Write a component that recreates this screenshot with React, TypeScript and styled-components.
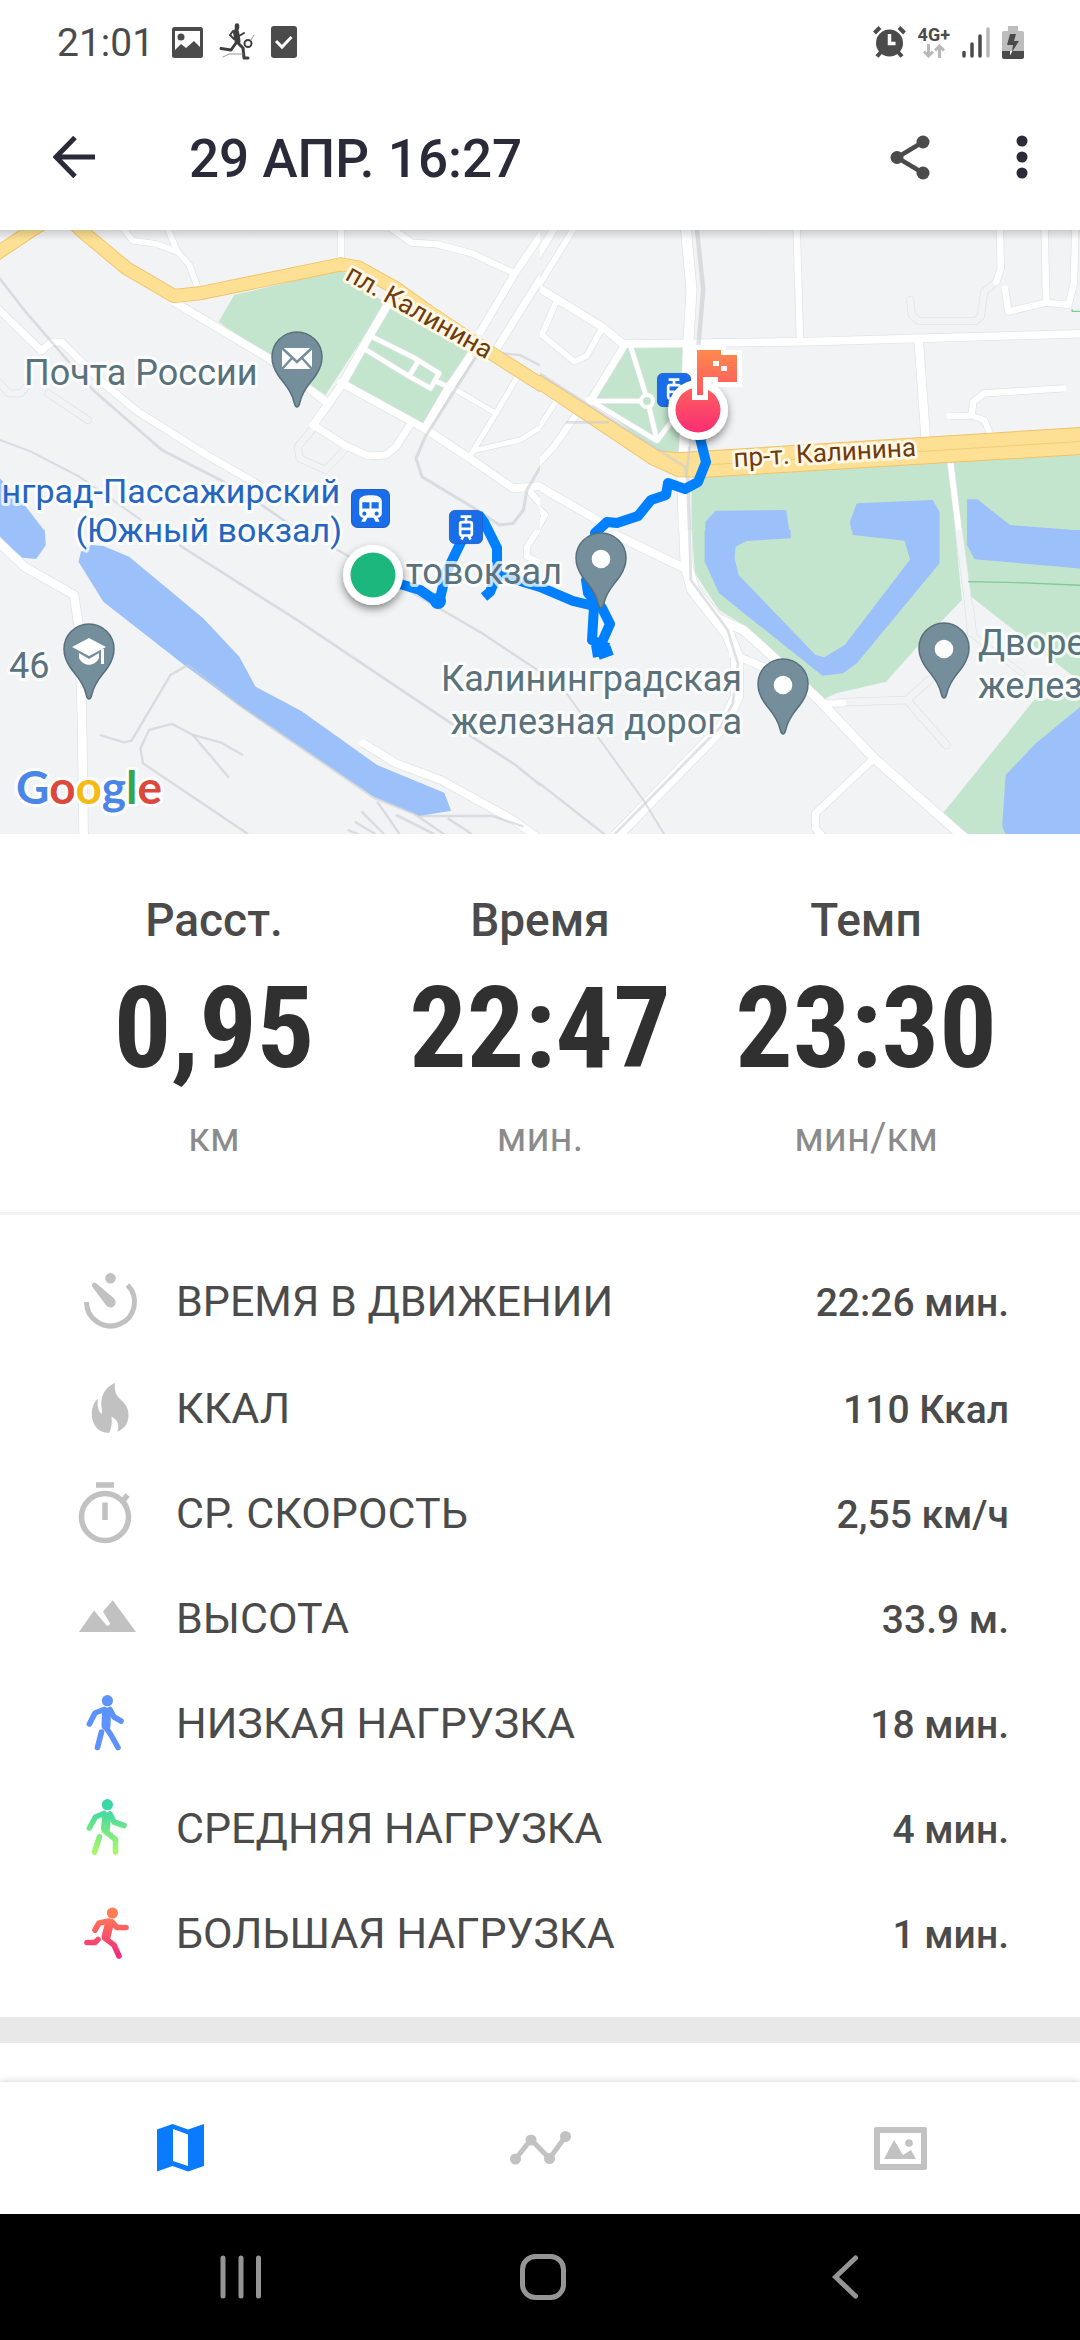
import React from 'react';
import styled, { createGlobalStyle } from 'styled-components';

const GlobalStyle = createGlobalStyle`
  *, *::before, *::after { box-sizing: border-box; }
  body { margin: 0; background: #fff; font-family: Roboto, "Noto Sans", sans-serif; color: #4b4b4b; }
  h1, dl, dt, dd, p { margin: 0; font-weight: inherit; }
  button { border: 0; padding: 0; background: none; font: inherit; color: inherit; cursor: pointer; }
  svg { display: block; flex: none; }
`;

/* ---------- layout parts ---------- */

const Screen = styled.div`
  min-height: 100vh;
  display: flex;
  flex-direction: column;
`;

const StatusBar = styled.div`
  display: flex;
  align-items: center;
  justify-content: space-between;
  height: 84px;
  padding: 0 56px 0 57px;
`;

const StatusGroup = styled.div<{ $gap: number }>`
  display: flex;
  align-items: center;
  gap: ${(p) => p.$gap}px;
`;

const Clock = styled.span`
  padding: 2px 2px 0 0;
  font-size: 39px;
  line-height: 48px;
`;

const Network = styled.span`
  display: flex;
  flex-direction: column;
  align-items: center;
  font-size: 18px;
  line-height: 18px;
  font-weight: 700;
`;

const AppBar = styled.header`
  display: flex;
  align-items: center;
  height: 146px;
  padding: 0 26px 0 42px;
`;

const IconButton = styled.button`
  display: flex;
  align-items: center;
  justify-content: center;
  width: 64px;
  height: 72px;
`;

const Title = styled.h1`
  flex: 1;
  padding: 4px 0 0 83px;
  font-size: 53px;
  line-height: 60px;
  font-weight: 500;
  color: #2a2a38;
`;

const AppActions = styled.div`
  display: flex;
  gap: 48px;
`;

const MapPanel = styled.section`
  overflow: hidden;
  background: #f1f3f4;
`;

const MapCanvas = styled.svg`
  width: 100%;
  height: auto;
`;

const Summary = styled.section`
  display: grid;
  grid-template-columns: repeat(3, 1fr);
  padding: 58px 51px 50px;
  border-bottom: 3px solid #f2f2f2;
`;

const SummaryItem = styled.div`
  display: flex;
  flex-direction: column;
  align-items: center;
`;

const SummaryLabel = styled.p`
  font-size: 46px;
  line-height: 56px;
  font-weight: 500;
`;

const SummaryValue = styled.p`
  margin-top: 12px;
  font-family: "Roboto Condensed", "Liberation Sans Narrow", Roboto, sans-serif;
  font-size: 114px;
  line-height: 136px;
  font-weight: 700;
  color: #303031;
`;

const SummaryUnit = styled.p`
  margin-top: 18px;
  font-size: 40px;
  line-height: 48px;
  color: #8b8b8b;
`;

const Details = styled.dl`
  padding: 32px 71px 32px 76px;
`;

const DetailRow = styled.div`
  display: flex;
  align-items: center;
  height: 105px;
  &:first-child { height: 108px; }
`;

const DetailLabel = styled.dt`
  flex: 1;
  padding-left: 36px;
  font-size: 43px;
  line-height: 52px;
`;

const DetailValue = styled.dd`
  padding-top: 4px;
  font-size: 39px;
  line-height: 52px;
  font-weight: 500;
`;

const Band = styled.div`
  height: 26px;
  background: #e8e8e8;
`;

const Filler = styled.div`
  flex: 1;
  min-height: 36px;
`;

const TabBar = styled.nav`
  display: grid;
  grid-template-columns: repeat(3, 1fr);
  height: 132px;
  background: #fff;
  box-shadow: 0 -2px 6px rgba(0, 0, 0, 0.12);
`;

const Tab = styled.button<{ $active?: boolean }>`
  display: flex;
  align-items: center;
  justify-content: center;
  color: ${(p) => (p.$active ? '#0a7bff' : '#c2c2c2')};
`;

const SystemBar = styled.div`
  display: grid;
  grid-template-columns: repeat(3, 1fr);
  height: 126px;
  padding: 0 84px 0 90px;
  background: #000;
  color: #959595;
`;

const SystemButton = styled.button`
  display: flex;
  align-items: center;
  justify-content: center;
`;

/* ---------- map ---------- */

type Road = { d: string; w: number; tone?: 'main' | 'faint' };
type TileData = {
  x: number;
  y: number;
  parks?: string[];
  water?: string[];
  avenue?: string[];
  avenueShapes?: string[];
  roads: Road[];
  rails: { d: string; w: number }[];
  trails?: string[];
};

const tiles: TileData[] = [
  {
    x: 0,
    y: 220,
    parks: [
      'M680 225L990 150L1120 250L945 525L780 415L635 305Z',
      'M1130 265L1370 400L1230 612L1005 485Z',
    ],
    water: ['M0 775L75 860L135 940H0Z'],
    avenue: ['M-20 108L90 32L140 0', 'M215 10L240 35L365 143L505 228L580 220L990 133L1040 142L1150 205L1240 272L1370 362L1470 428L1580 500'],
    roads: [
      { d: 'M0 490L25 520L60 520L85 490', w: 20, tone: 'faint' },
      { d: 'M140 520L255 600', w: 20, tone: 'faint' },
      { d: 'M905 630L865 680L870 715L945 750L1000 690', w: 20, tone: 'faint' },
      { d: 'M355 20L385 62L455 72L515 95L550 135L575 205', w: 18 },
      { d: 'M485 20L515 95', w: 18 },
      { d: 'M990 20V115', w: 20 },
      { d: 'M1130 20L1195 68L1270 73L1370 100L1490 158', w: 20 },
      { d: 'M1600 0L1495 160L1395 335', w: 22 },
      { d: 'M1640 60L1530 240L1440 390', w: 22 },
      { d: 'M505 245L780 415L940 540', w: 24 },
      { d: 'M-10 262L120 392L150 366L180 367L300 490L400 575L600 705L760 800', w: 22 },
      { d: 'M1125 255L1060 370L995 490L910 615', w: 24 },
      { d: 'M1070 345L1200 412L1275 460L1250 505L1190 470L1055 385', w: 15 },
      { d: 'M1215 422L1190 465', w: 15 },
      { d: 'M1262 482L1300 500', w: 15 },
      { d: 'M990 488L1240 630L1360 712L1490 805L1580 797', w: 24 },
      { d: 'M1375 395L1300 510L1235 625', w: 26 },
      { d: 'M910 615L1000 675L1070 708L1120 705L1150 680L1190 615', w: 22 },
      { d: 'M1300 495L1440 580L1500 475', w: 16 },
      { d: 'M1440 580L1370 700', w: 16 },
      { d: 'M1375 692L1510 660L1580 615', w: 16 },
      { d: 'M1535 810L1568 850', w: 20 },
    ],
    rails: [
      { d: 'M-5 170L70 270L270 510L470 690L640 780L760 855L850 920', w: 8 },
      { d: 'M0 660L90 695L230 770L410 900', w: 6 },
      { d: 'M1400 380L1370 430L1235 650L1208 715L1225 770L1370 860L1450 915L1490 910L1520 870L1530 810L1575 730', w: 9 },
      { d: 'M1460 400L1510 405L1575 440', w: 7 },
    ],
  },
  {
    x: 540,
    y: 220,
    parks: [
      'M150 545L245 385L418 383V695H345Z',
      'M480 770L1570 703V940H440V780Z',
    ],
    water: [
      'M480 905L510 872L715 870L725 940H480Z',
      'M920 850L1140 840L1160 875V940H905L900 905Z',
      'M1240 838H1270L1365 915L1570 932V940H1240Z',
    ],
    avenueShapes: ['M-5 462L130 550L345 692L400 698L530 690L1575 622V703L480 772L400 770L320 733L-5 508Z'],
    roads: [
      { d: 'M1325 185L1290 215L1280 290L1265 303H1100L1080 285L1075 240', w: 20, tone: 'faint' },
      { d: 'M-60 195L45 20', w: 22 },
      { d: 'M-20 225L95 30', w: 18 },
      { d: 'M423 20L440 210L430 380L418 700', w: 30 },
      { d: 'M745 20L755 360', w: 20 },
      { d: 'M240 372L420 370L780 365L1100 355L1580 341', w: 24 },
      { d: 'M-10 200L180 320L245 375', w: 24 },
      { d: 'M45 250L5 345L100 425L135 408L180 325', w: 18 },
      { d: 'M240 385L145 545', w: 22 },
      { d: 'M265 385L312 540L337 650', w: 15 },
      { d: 'M150 543H310', w: 15 },
      { d: 'M140 538L340 662L400 580', w: 15 },
      { d: 'M1100 365L1120 655', w: 26 },
      { d: 'M1335 20L1338 145L1325 185', w: 20 },
      { d: 'M1350 205L1360 275L1470 248L1535 255L1550 190L1555 20', w: 20 },
      { d: 'M1465 20L1470 248', w: 20 },
      { d: 'M1520 505L1290 520L1258 545L1253 587L1190 588', w: 20 },
      { d: 'M1253 587L1290 600L1307 640', w: 18 },
      { d: 'M1192 730L1217 940', w: 18 },
      { d: 'M-5 625L45 548', w: 16 },
      { d: 'M-5 730L40 680L105 585', w: 20 },
      { d: 'M-10 795L200 920', w: 24 },
      { d: 'M-20 850L15 885L-10 930', w: 18 },
      { d: 'M415 770L420 940', w: 34 },
    ],
    rails: [
      { d: 'M455 20L474 210L460 375', w: 13 },
      { d: 'M-5 458L345 690L420 740L425 770L434 680', w: 7 },
      { d: 'M75 607H200', w: 8 },
      { d: 'M428 770L434 940', w: 9 },
    ],
    trails: ['M1545 268V274H1570'],
  },
  {
    x: 0,
    y: 530,
    water: [
      'M0 0H130L133 45L105 87L65 83L0 25Z',
      'M235 65L265 45L300 48L375 80L590 265L695 380L742 470L875 543L1095 705L1290 788L1310 842L1218 858L1085 800L700 530L535 405L300 215L228 95Z',
    ],
    roads: [
      { d: 'M-10 30L70 110L215 195L230 300L238 560L243 930', w: 26 },
      { d: 'M1055 640L1150 700L1280 750L1490 870L1570 930', w: 24 },
      { d: 'M1562 0L1530 50V80L1575 100', w: 18 },
    ],
    rails: [
      { d: 'M520 45L870 275L1310 580L1490 700L1575 770', w: 8 },
      { d: 'M960 48L1200 190L1400 310L1575 430', w: 7 },
      { d: 'M290 615L360 637L382 632L495 435L545 405', w: 7 },
      { d: 'M720 912L415 700L408 655L433 600L500 582L560 615L640 637L705 675', w: 7 },
      { d: 'M560 615L665 743', w: 7 },
      { d: 'M545 405L700 530L1085 803L1200 850L1300 920', w: 7 },
      { d: 'M1095 815L1160 912', w: 7 },
      { d: 'M1150 855L1260 912', w: 8 },
      { d: 'M1220 858H1430L1520 890', w: 7 },
      { d: 'M1050 845L1115 912', w: 7 },
      { d: 'M1030 875L1090 912', w: 7 },
      { d: 'M1010 900L1040 912', w: 7 },
      { d: 'M1300 865L1370 912', w: 7 },
    ],
  },
  {
    x: 540,
    y: 530,
    parks: [
      'M440 -5L450 130L520 240L600 290L820 510L860 490L1005 455L1100 345L1225 210L1205 -5Z',
      'M1225 -5H1575V460L1245 195Z',
      'M1435 510L1575 495V930H1240L1170 850Z',
    ],
    water: [
      'M478 -5V95L520 190L820 437L880 430L920 400L1160 100V-5H905L908 15L1058 32L1075 88L885 345L825 382L800 375L577 135L565 85L568 50L600 33L728 25V-5Z',
      'M1240 -5V45L1262 88L1575 116V-5Z',
      'M1575 525L1440 640L1352 735L1342 890L1360 930H1575Z',
    ],
    roads: [
      { d: 'M870 517L1065 510L1130 450', w: 22, tone: 'faint' },
      { d: 'M1065 510L1180 645', w: 22, tone: 'faint' },
      { d: 'M1250 225L1262 320L1400 430', w: 14, tone: 'faint' },
      { d: 'M1215 -5L1240 190L1252 310', w: 20, tone: 'faint' },
      { d: 'M220 15L420 115', w: 26 },
      { d: 'M422 -5L426 110L445 180L545 310L572 380V500L530 590L215 925', w: 36 },
      { d: 'M510 262L590 300L660 365L810 510L970 685L1240 930', w: 28 },
      { d: 'M560 375L600 390L690 430', w: 24 },
      { d: 'M970 685L800 850V895L830 930', w: 22 },
      { d: 'M820 520H880', w: 20 },
    ],
    rails: [
      { d: 'M434 -5L438 150L545 300L565 370L575 400L560 520L525 590L205 925', w: 8 },
      { d: 'M-5 757L190 915', w: 7 },
      { d: 'M70 480L300 810L362 915', w: 6 },
    ],
    trails: ['M1243 155L1390 158L1575 166'],
  },
];

function MapTile({ tile }: { tile: TileData }) {
  const id = `tile-${tile.x}-${tile.y}`;
  const line = { fill: 'none', strokeLinejoin: 'round' as const };
  return (
    <g transform={`translate(${tile.x} ${tile.y}) scale(.34439 .33333)`} clipPath={`url(#${id})`}>
      <clipPath id={id}>
        <rect width="1569" height="931" />
      </clipPath>
      <rect width="1569" height="931" fill="#f1f3f4" />
      {tile.parks?.map((d) => <path key={d} d={d} fill="#c4e5cd" />)}
      {tile.water?.map((d) => <path key={d} d={d} fill="#9cc0fa" />)}
      {tile.roads.map((r) => (
        <path key={r.d} d={r.d} {...line} strokeLinecap={r.tone ? 'round' : 'butt'} stroke="#dfe2e4" strokeWidth={r.w + 3} />
      ))}
      {tile.roads.map((r) => (
        <path key={r.d} d={r.d} {...line} strokeLinecap="round" stroke={r.tone ? '#f1f3f4' : '#fff'} strokeWidth={r.w - 1} />
      ))}
      {tile.avenue?.map((d) => <path key={d} d={d} {...line} stroke="#f1c168" strokeWidth="42" />)}
      {tile.avenue?.map((d) => <path key={d} d={d} {...line} stroke="#fde093" strokeWidth="37" />)}
      {tile.avenueShapes?.map((d) => <path key={d} d={d} fill="#fde093" stroke="#f1c168" strokeWidth="3" />)}
      {tile.avenueShapes && <path d="M480 735L1575 664" stroke="#f1c168" strokeWidth="2" />}
      {tile.rails.map((r) => <path key={r.d} d={r.d} {...line} stroke="#c9cdd0" strokeOpacity=".6" strokeWidth={r.w} />)}
      {tile.trails?.map((d) => <path key={d} d={d} {...line} stroke="#81c995" strokeWidth="4" />)}
    </g>
  );
}

function Pin({ x, y, children }: { x: number; y: number; children?: React.ReactNode }) {
  return (
    <g transform={`translate(${x} ${y})`}>
      <path
        d="M0 38C-2 38-2 36-3 33C-6 20-13 15-19 6C-23 0-25-6-25-12A25 25 0 0 1 25-12C25-6 23 0 19 6C13 15 6 20 3 33C2 36 2 38 0 38Z"
        fill="#748e9b"
        stroke="#58707c"
        strokeWidth="1.5"
      />
      {children ?? <circle cy="-11" r="9.3" fill="#fff" />}
    </g>
  );
}

function StopSign({ x, y, size, tram }: { x: number; y: number; size: number; tram?: boolean }) {
  return (
    <g transform={`translate(${x} ${y}) scale(${size / 38})`}>
      <rect x=".5" y=".5" width="37" height="37" rx="6" fill="#1a6de8" stroke="#2460c4" />
      {tram ? (
        <g fill="none" stroke="#fff" strokeWidth="3">
          <path d="M13 7.500H25M19 8V13" />
          <rect x="12.500" y="13.500" width="13" height="15" rx="2" />
          <path d="M12 21H26M14 33L16 29M24 33L22 29" />
        </g>
      ) : (
        <>
          <path d="M8 12C8 7 13 6 19 6S30 7 30 12V24C30 26 28 28 26 28L28 32H24L22 28H16L14 32H10L12 28C10 28 8 26 8 24Z" fill="#fff" />
          <path d="M11 13H18V19H11ZM20 13H27V19H20Z" fill="#1a6de8" />
          <circle cx="13" cy="24" r="2" fill="#1a6de8" />
          <circle cx="25" cy="24" r="2" fill="#1a6de8" />
        </>
      )}
    </g>
  );
}

const MapText = styled.text<{ $tone: 'place' | 'station' | 'street'; $size: number }>`
  font-family: Roboto, "Noto Sans", sans-serif;
  font-size: ${(p) => p.$size}px;
  fill: ${(p) => ({ place: '#5a727c', station: '#2565c2', street: '#6e3b0c' })[p.$tone]};
  stroke: ${(p) => (p.$tone === 'street' ? '#fff8e6' : '#fff')};
  stroke-width: 6px;
  stroke-opacity: ${(p) => (p.$tone === 'street' ? 1 : 0.75)};
  stroke-linejoin: round;
  paint-order: stroke;
`;

const Logo = styled.text`
  font-family: Lato, Roboto, sans-serif;
  font-size: 46px;
  font-weight: 700;
  stroke: #fff;
  stroke-width: 6px;
  stroke-linejoin: round;
  paint-order: stroke;
`;

function RouteMap() {
  return (
    <MapCanvas viewBox="0 230 1080 604" role="img" aria-label="Карта маршрута">
      <defs>
        <linearGradient id="finish" x1="0" y1="350" x2="0" y2="433" gradientUnits="userSpaceOnUse">
          <stop offset="0" stopColor="#ff8a4c" />
          <stop offset="1" stopColor="#fb2c74" />
        </linearGradient>
        <linearGradient id="barShade" x1="0" y1="0" x2="0" y2="1">
          <stop offset="0" stopColor="#000" stopOpacity=".16" />
          <stop offset="1" stopColor="#000" stopOpacity="0" />
        </linearGradient>
        <filter id="drop" x="-50%" y="-50%" width="200%" height="200%">
          <feDropShadow dx="0" dy="4" stdDeviation="4" floodOpacity=".45" />
        </filter>
      </defs>
      {tiles.map((t) => <MapTile key={`${t.x}-${t.y}`} tile={t} />)}
      <circle cx="647" cy="401" r="6" fill="#c4e5cd" stroke="#fff" strokeWidth="4" />

      <g fill="none" stroke="#0080ff" strokeWidth="10" strokeLinejoin="round">
        <path d="M698 430L706 462L698 482L685 489L668 483L666 495L651 500L638 516L617 523L607 522L595 533L601 560L586 580L588 593L602 608L610 624L602 642L605 655" />
        <path d="M590 590L594 607L592 640L608 648M598 655L612 650M596 645L598 657" />
        <path d="M594 606L573 601L540 587L510 578L497 575L490 592L484 597M497 580V548L484 522L478 514" />
        <path d="M462 540L446 573L439 603L420 590L400 584" />
        <circle cx="438" cy="601" r="3" />
      </g>

      <StopSign x={351} y={489} size={39} />
      <StopSign x={449} y={510} size={34} tram />
      <StopSign x={657} y={373} size={34} tram />

      <MapText $tone="place" $size={36} x="24" y="385">Почта России</MapText>
      <MapText $tone="station" $size={34} x="340" y="503" textAnchor="end">нград-Пассажирский</MapText>
      <MapText $tone="station" $size={34} x="342" y="542" textAnchor="end">(Южный вокзал)</MapText>
      <MapText $tone="place" $size={36} x="562" y="584" textAnchor="end">товокзал</MapText>
      <MapText $tone="place" $size={36} x="9" y="678">46</MapText>
      <MapText $tone="place" $size={36} x="742" y="691" textAnchor="end">Калининградская</MapText>
      <MapText $tone="place" $size={36} x="742" y="734" textAnchor="end">железная дорога</MapText>
      <MapText $tone="place" $size={36} x="978" y="655">Дворе</MapText>
      <MapText $tone="place" $size={36} x="978" y="698">желез</MapText>
      <MapText $tone="street" $size={26} transform="translate(344 279) rotate(29.500)">пл. Калинина</MapText>
      <MapText $tone="street" $size={26} transform="translate(734 467) rotate(-3.500)">пр-т. Калинина</MapText>

      <Pin x={297} y={369}>
        <path d="M-15-21H15V0H-15Z" fill="#fff" />
        <path d="M-15-21L0-7L15-21M-15 0L-5-11M15 0L5-11" fill="none" stroke="#748e9b" strokeWidth="2.500" />
      </Pin>
      <Pin x={89} y={661}>
        <path d="M-17-14L0-23L17-14L0-5ZM-10-8V-3C-6 6 6 6 10-3V-8L0-2ZM12-12H15V3H12Z" fill="#fff" />
      </Pin>
      <Pin x={601} y={570} />
      <Pin x={783} y={696} />
      <Pin x={944} y={660} />

      <circle cx="373" cy="575" r="30" fill="#fff" filter="url(#drop)" />
      <circle cx="373" cy="575" r="22.500" fill="#1bb77c" />

      <circle cx="698" cy="410" r="30" fill="#fff" filter="url(#drop)" />
      <circle cx="698" cy="410" r="22.500" fill="url(#finish)" />
      <path d="M697 350H721V355H737V382H718V377H703V395H697Z" fill="#fff" stroke="#fff" strokeWidth="10" />
      <path d="M697 350H721V355H737V382H718V377H703V395H697Z" fill="url(#finish)" />
      <path d="M713 361H719V366H727V371H721V366H713Z" fill="#fff" />

      <Logo x="16" y="804">
        <tspan fill="#4a86e8">G</tspan>
        <tspan fill="#dc483b">o</tspan>
        <tspan fill="#f4bb16">o</tspan>
        <tspan fill="#4a86e8">g</tspan>
        <tspan fill="#34a553">l</tspan>
        <tspan fill="#dc483b">e</tspan>
      </Logo>
      <rect y="230" width="1080" height="10" fill="url(#barShade)" />
    </MapCanvas>
  );
}

/* ---------- icons ---------- */

const grey = '#c1c1c1';

const MovingTimeIcon = () => (
  <svg width="64" height="64" viewBox="0 0 64 64" fill={grey}>
    <path d="M10.500 33A24 24 0 1 0 51.500 16" fill="none" stroke={grey} strokeWidth="5" />
    <circle cx="34.500" cy="9.300" r="5.300" />
    <path d="M16.500 18C14.500 15 18 12.500 20.500 14.500L37.500 29C41 32 40 38 35 38.500C32.500 38.700 30.800 37.500 29.500 35.500Z" />
  </svg>
);

const FlameIcon = () => (
  <svg width="64" height="64" viewBox="0 0 64 64" fill={grey}>
    <path d="M39 7C38 17 41 20 45 24C50 28 52.500 33 52.500 39C52.500 47 49 53 41 55.500C44 50 42 44 35.500 40.500C36 46 36 52 33 57C22 57 15.800 48 15.800 38C15.800 32 18 26 22 22.500C21 29 22 35 25.500 38C27 36 24.500 30 25.500 24C27 15 32 10 39 7Z" />
  </svg>
);

const StopwatchIcon = () => (
  <svg width="64" height="64" viewBox="0 0 64 64" fill="none" stroke={grey} strokeWidth="5.500">
    <circle cx="29" cy="36" r="23.500" />
    <path d="M20 4H38M29 21.500V39M46 21L51.500 14" />
  </svg>
);

const MountainIcon = () => (
  <svg width="64" height="64" viewBox="0 0 64 64" fill={grey}>
    <path d="M3 46L18 24.500L31 40L34.500 38L27 25.500L36.800 14.300L60 46Z" />
  </svg>
);

type FigureProps = { id: string; from: string; to: string; head: [number, number]; limbs: string; torso: string };

const Figure = ({ id, from, to, head, limbs, torso }: FigureProps) => (
  <svg width="64" height="64" viewBox="0 0 64 64" strokeLinecap="round" strokeLinejoin="round">
    <linearGradient id={id} x1="0" y1="4" x2="0" y2="60" gradientUnits="userSpaceOnUse">
      <stop offset=".15" stopColor={from} />
      <stop offset=".9" stopColor={to} />
    </linearGradient>
    <circle cx={head[0]} cy={head[1]} r="5.600" fill={`url(#${id})`} />
    <g fill="none" stroke={`url(#${id})`}>
      <path d={limbs} strokeWidth="5.600" />
      <path d={torso} strokeWidth="9" />
    </g>
  </svg>
);

const WalkIcon = () => (
  <Figure id="walk" from="#5b93fb" to="#5f92fa" head={[31.4, 9.7]}
    limbs="M13.400 33L19 22L28 18.500M34 18.500L38 26L45 30M25.500 41L21.500 56.500M31 38L35 44L42 56.500" torso="M30.500 21L30 35" />
);
const BriskIcon = () => (
  <Figure id="brisk" from="#3bd6a6" to="#a5f56d" head={[31.4, 8.7]}
    limbs="M13.400 32L19.500 21L28 17.500M34 18L38 26L48 29.500M23.500 41L18.500 56M29 35L39.500 43.500V56" torso="M30.500 21L29.500 33" />
);
const RunIcon = () => (
  <Figure id="run" from="#ff7f52" to="#f22c7b" head={[36.4, 12]}
    limbs="M19 29L23 22L33 20M36 21L41 26.500H50M22 38.500L19 41.500H11M30 38L38 44L43 55" torso="M33 24L30 36" />
);

const SystemIcons = {
  picture: (
    <svg width="31" height="31" viewBox="0 0 31 31">
      <path fillRule="evenodd" d="M2.500 0H28.500Q31 0 31 2.500V28.500Q31 31 28.500 31H2.500Q0 31 0 28.500V2.500Q0 0 2.500 0ZM3 4V23L9 17L14 21L22 14L28 20V4Z" fill="#4b4b4b" />
      <circle cx="9" cy="10" r="3.500" fill="#4b4b4b" />
    </svg>
  ),
  runner: (
    <svg width="36" height="38" viewBox="0 0 36 38" fill="none" stroke="#3f3f3f" strokeLinecap="round" strokeLinejoin="round">
      <path d="M18 2.500V5" strokeWidth="4.500" />
      <path d="M17 9L18.500 18" strokeWidth="6" />
      <path d="M14 8L11 12L15 16M20 13L25 10" strokeWidth="2" />
      <path d="M18 19L24 25L25 35H29M17 20L12 27L2 25.500" strokeWidth="3" />
      <circle cx="29" cy="20.500" r="3.500" strokeWidth="2" />
      <path d="M32 17L35 12M4 34L10 31H24" strokeWidth="1" stroke="#999" />
    </svg>
  ),
  check: (
    <svg width="26" height="32" viewBox="0 0 26 32">
      <rect width="26" height="32" rx="3" fill="#4b4b4b" />
      <path d="M5 15L11 21L20.500 11" fill="none" stroke="#fff" strokeWidth="3" />
    </svg>
  ),
  alarm: (
    <svg width="33" height="32" viewBox="0 0 33 32" fill="none" stroke="#4b4b4b" strokeWidth="4">
      <circle cx="16.500" cy="17" r="13.500" fill="#4b4b4b" stroke="none" />
      <path d="M1.500 7L7 1.500M31.500 7L26 1.500M4 30.500L8 26M29 30.500L25 26" />
      <path d="M16.500 8V17.500H22.500" stroke="#fff" strokeWidth="3.500" />
    </svg>
  ),
  traffic: (
    <svg width="22" height="14" viewBox="0 0 22 14" fill="none" stroke="#b9b9b9" strokeWidth="3">
      <path d="M5.500 0V12M1 7.500L5.500 12L10 7.500M16.500 14V2M12 6.500L16.500 2L21 6.500" />
    </svg>
  ),
  signal: (
    <svg width="28" height="31" viewBox="0 0 28 31" strokeWidth="3.500" strokeLinecap="round" stroke="#4b4b4b">
      <path d="M2 25.500V29M10 17V29M18 9V29" />
      <path d="M26 2V29" stroke="#b9b9b9" />
    </svg>
  ),
  battery: (
    <svg width="22" height="33" viewBox="0 0 22 33">
      <path d="M6 0H16V5H20Q22 5 22 7V25H0V7Q0 5 2 5H6Z" fill="#bdbdbd" />
      <path d="M0 25H22V31Q22 33 20 33H2Q0 33 0 31Z" fill="#4b4b4b" />
      <path d="M8 8H14L12 15H17L10 26L11 19H5Z" fill="#4b4b4b" />
      <path d="M8 25H10.500L8 29.500Z" fill="#fff" />
    </svg>
  ),
};

/* ---------- data ---------- */

const summary = [
  { label: 'Расст.', value: '0,95', unit: 'км' },
  { label: 'Время', value: '22:47', unit: 'мин.' },
  { label: 'Темп', value: '23:30', unit: 'мин/км' },
];

const details = [
  { Icon: MovingTimeIcon, label: 'ВРЕМЯ В ДВИЖЕНИИ', value: '22:26 мин.' },
  { Icon: FlameIcon, label: 'ККАЛ', value: '110 Ккал' },
  { Icon: StopwatchIcon, label: 'СР. СКОРОСТЬ', value: '2,55 км/ч' },
  { Icon: MountainIcon, label: 'ВЫСОТА', value: '33.9 м.' },
  { Icon: WalkIcon, label: 'НИЗКАЯ НАГРУЗКА', value: '18 мин.' },
  { Icon: BriskIcon, label: 'СРЕДНЯЯ НАГРУЗКА', value: '4 мин.' },
  { Icon: RunIcon, label: 'БОЛЬШАЯ НАГРУЗКА', value: '1 мин.' },
];

export default function App() {
  return (
    <Screen>
      <GlobalStyle />
      <StatusBar>
        <StatusGroup $gap={16}>
          <Clock>21:01</Clock>
          {SystemIcons.picture}
          {SystemIcons.runner}
          {SystemIcons.check}
        </StatusGroup>
        <StatusGroup $gap={12}>
          {SystemIcons.alarm}
          <Network>
            4G+
            {SystemIcons.traffic}
          </Network>
          {SystemIcons.signal}
          {SystemIcons.battery}
        </StatusGroup>
      </StatusBar>

      <AppBar>
        <IconButton aria-label="Назад">
          <svg width="42" height="42" viewBox="0 0 42 42" fill="none" stroke="#2a2a38" strokeWidth="5">
            <path d="M42 21H3M22 1.500L3 21L22 40.500" />
          </svg>
        </IconButton>
        <Title>29 АПР. 16:27</Title>
        <AppActions>
          <IconButton aria-label="Поделиться">
            <svg width="40" height="45" viewBox="0 0 40 45" fill="#4b4b4b">
              <path d="M33 7L7 22.500L33 38" fill="none" stroke="#4b4b4b" strokeWidth="4.500" />
              <circle cx="33" cy="7" r="6.500" />
              <circle cx="7" cy="22.500" r="6.500" />
              <circle cx="33" cy="38" r="6.500" />
            </svg>
          </IconButton>
          <IconButton aria-label="Ещё">
            <svg width="12" height="44" viewBox="0 0 12 44" fill="#2a2a38">
              <circle cx="6" cy="6" r="5.500" />
              <circle cx="6" cy="22" r="5.500" />
              <circle cx="6" cy="38" r="5.500" />
            </svg>
          </IconButton>
        </AppActions>
      </AppBar>

      <MapPanel>
        <RouteMap />
      </MapPanel>

      <Summary>
        {summary.map((s) => (
          <SummaryItem key={s.label}>
            <SummaryLabel>{s.label}</SummaryLabel>
            <SummaryValue>{s.value}</SummaryValue>
            <SummaryUnit>{s.unit}</SummaryUnit>
          </SummaryItem>
        ))}
      </Summary>

      <Details>
        {details.map(({ Icon, label, value }) => (
          <DetailRow key={label}>
            <Icon />
            <DetailLabel>{label}</DetailLabel>
            <DetailValue>{value}</DetailValue>
          </DetailRow>
        ))}
      </Details>
      <Band />
      <Filler />

      <TabBar>
        <Tab $active aria-label="Карта">
          <svg width="47" height="48" viewBox="0 0 47 48" fill="currentColor">
            <path fillRule="evenodd" d="M0 5.500L15.500 0L31 5.500L47 0V42L31 47.500L15.500 42L0 47.500ZM16 5V37L31 42V10.500Z" />
          </svg>
        </Tab>
        <Tab aria-label="График">
          <svg width="61" height="34" viewBox="0 0 61 34" fill="currentColor">
            <path d="M5.500 28L21 8.500L39.500 27.500L55.500 5.500" fill="none" stroke="currentColor" strokeWidth="5" />
            <circle cx="5.500" cy="28" r="5.500" />
            <circle cx="21" cy="9" r="5.500" />
            <circle cx="39.500" cy="27.500" r="5.500" />
            <circle cx="55.500" cy="5.500" r="5.500" />
          </svg>
        </Tab>
        <Tab aria-label="Фото">
          <svg width="53" height="43" viewBox="0 0 53 43" fill="currentColor">
            <path fillRule="evenodd" d="M2 0H51Q53 0 53 2V41Q53 43 51 43H2Q0 43 0 41V2Q0 0 2 0ZM6 6V37H47V6Z" />
            <path d="M10 32L20 13L29 28L37 23L42 32Z" />
            <circle cx="35" cy="16" r="3.800" />
          </svg>
        </Tab>
      </TabBar>

      <SystemBar>
        <SystemButton aria-label="Недавние">
          <svg width="42" height="44" viewBox="0 0 42 44" stroke="currentColor" strokeWidth="5" strokeLinecap="round">
            <path d="M3 3V41M21 3V41M38.500 3V41" />
          </svg>
        </SystemButton>
        <SystemButton aria-label="Домой">
          <svg width="46" height="46" viewBox="0 0 46 46" fill="none" stroke="currentColor" strokeWidth="5">
            <rect x="2.500" y="2.500" width="41" height="41" rx="13" />
          </svg>
        </SystemButton>
        <SystemButton aria-label="Назад">
          <svg width="26" height="44" viewBox="0 0 26 44" fill="none" stroke="currentColor" strokeWidth="5" strokeLinecap="round">
            <path d="M23.500 3L3.500 22L23.500 41" />
          </svg>
        </SystemButton>
      </SystemBar>
    </Screen>
  );
}
